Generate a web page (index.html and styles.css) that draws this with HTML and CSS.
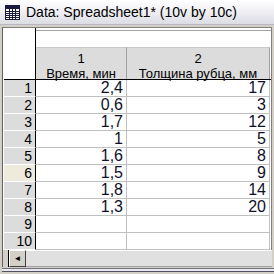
FILE: index.html
```html
<!DOCTYPE html>
<html lang="ru">
<head>
    <meta charset="UTF-8">
    <title>Data: Spreadsheet1*</title>
    <link rel="stylesheet" href="styles.css">
</head>
<body>
    <div class="window">
        <div class="titlebar">
            <svg class="title-icon" width="15" height="15" viewBox="0 0 15 15">
                <rect x="0.5" y="0.5" width="14" height="14" fill="#fff" stroke="#1a1a40"/>
                <rect x="1" y="1" width="13" height="3" fill="#1a1a40"/>
                <path d="M1 6.5h13M1 8.5h13M1 10.5h13M1 12.5h13M4.5 4v10M7.5 4v10M10.5 4v10" stroke="#1a1a40" stroke-width="1"/>
            </svg>
            <span class="title">Data: Spreadsheet1* (10v by 10c)</span>
        </div>
        <div class="frame">
            <div class="sheet">
                <div class="row head-top">
                    <div class="rh corner"></div>
                    <div class="names"></div>
                </div>
                <div class="row head">
                    <div class="rh corner"></div>
                    <div class="ch c1">1<br>Время, мин</div>
                    <div class="ch c2">2<br>Толщина рубца, мм</div>
                </div>
                <div class="row"><div class="rh">1</div><div class="cell c1">2,4</div><div class="cell c2">17</div></div>
                <div class="row"><div class="rh">2</div><div class="cell c1">0,6</div><div class="cell c2">3</div></div>
                <div class="row"><div class="rh">3</div><div class="cell c1">1,7</div><div class="cell c2">12</div></div>
                <div class="row"><div class="rh">4</div><div class="cell c1">1</div><div class="cell c2">5</div></div>
                <div class="row"><div class="rh">5</div><div class="cell c1">1,6</div><div class="cell c2">8</div></div>
                <div class="row"><div class="rh active">6</div><div class="cell c1">1,5</div><div class="cell c2">9</div></div>
                <div class="row"><div class="rh">7</div><div class="cell c1">1,8</div><div class="cell c2">14</div></div>
                <div class="row"><div class="rh">8</div><div class="cell c1">1,3</div><div class="cell c2">20</div></div>
                <div class="row"><div class="rh">9</div><div class="cell c1"></div><div class="cell c2"></div></div>
                <div class="row"><div class="rh">10</div><div class="cell c1"></div><div class="cell c2"></div></div>
            </div>
            <div class="hscroll">
                <div class="split"></div>
                <div class="arrow">&#9668;</div>
                <div class="track"></div>
            </div>
            <div class="frame-bottom"></div>
        </div>
    </div>
</body>
</html>
```

FILE: styles.css
```css
* {
    margin: 0;
    padding: 0;
    box-sizing: border-box;
}
body {
    width: 274px;
    height: 274px;
    overflow: hidden;
    background: #d4d0c8;
    font-family: "Liberation Sans", Arial, sans-serif;
}
.window {
    width: 274px;
    height: 274px;
    display: flex;
    flex-direction: column;
}
.titlebar {
    height: 25px;
    display: flex;
    align-items: center;
    padding-left: 5px;
    background: linear-gradient(#ffffff, #f2f2f6 40%, #dcdce4);
    border-bottom: 1px solid #b8b8c4;
}
.title-icon {
    margin-right: 6px;
    margin-top: 1px;
}
.title {
    font-size: 14px;
    color: #000;
    white-space: nowrap;
}
.frame {
    flex: 1;
    display: flex;
    flex-direction: column;
    background: #d4d0c8;
    border-left: 2px solid #d4d0c8;
    padding-top: 2px;
}
.sheet {
    border-left: 1px solid #606060;
    border-top: 1px solid #808080;
    border-right: 1px solid #808080;
    padding-left: 1px;
    background: #fff;
    width: 270px;
}
.row {
    display: flex;
    height: 17px;
}
.rh {
    width: 32px;
    flex-shrink: 0;
    border-right: 1px solid #000;
    border-bottom: 1px solid #fff;
    background: #dcdcdc;
    font-size: 14px;
    text-align: right;
    padding-right: 3px;
    line-height: 16px;
    color: #000;
}
.rh.active {
    background: #eeeadc;
}
.rh.corner {
    background: #fff;
    border-bottom: none;
}
.head-top {
    height: 19px;
}
.names {
    flex: 1;
    margin-top: 2px;
    border-top: 1px solid #a0a0a0;
}
.head {
    height: 33px;
    border-bottom: 1px solid #000;
}
.head .rh.corner {
    height: 32px;
}
.ch {
    background: #dcdcdc;
    border-right: 1px solid #a0a0a0;
    border-top: 1px solid #c8c8c8;
    text-align: center;
    font-size: 13px;
    line-height: 15px;
    padding-top: 3px;
    color: #000;
}
.c1 {
    width: 91px;
}
.c2 {
    width: 143px;
}
.cell {
    border-right: 1px solid #c0c0c0;
    border-bottom: 1px solid #c0c0c0;
    text-align: right;
    padding-right: 3px;
    font-size: 16px;
    line-height: 16px;
    color: #10102a;
}
.hscroll {
    height: 17px;
    display: flex;
    margin-right: 2px;
}
.split {
    width: 7px;
    background: #d4d0c8;
    border-right: 1px solid #000;
    border-left: 1px solid #606060;
}
.arrow {
    width: 17px;
    background: #d4d0c8;
    border: 1px solid;
    border-color: #fff #404040 #404040 #fff;
    font-size: 8px;
    line-height: 15px;
    text-align: center;
}
.track {
    flex: 1;
    background: #e0e0e0;
    border-top: 1px solid #fff;
    border-bottom: 1px solid #a0a0a0;
}
.frame-bottom {
    height: 4px;
    margin-top: 1px;
    border-top: 1px solid #707080;
    border-bottom: 1px solid #505060;
    background: #e8e8ee;
}
```
